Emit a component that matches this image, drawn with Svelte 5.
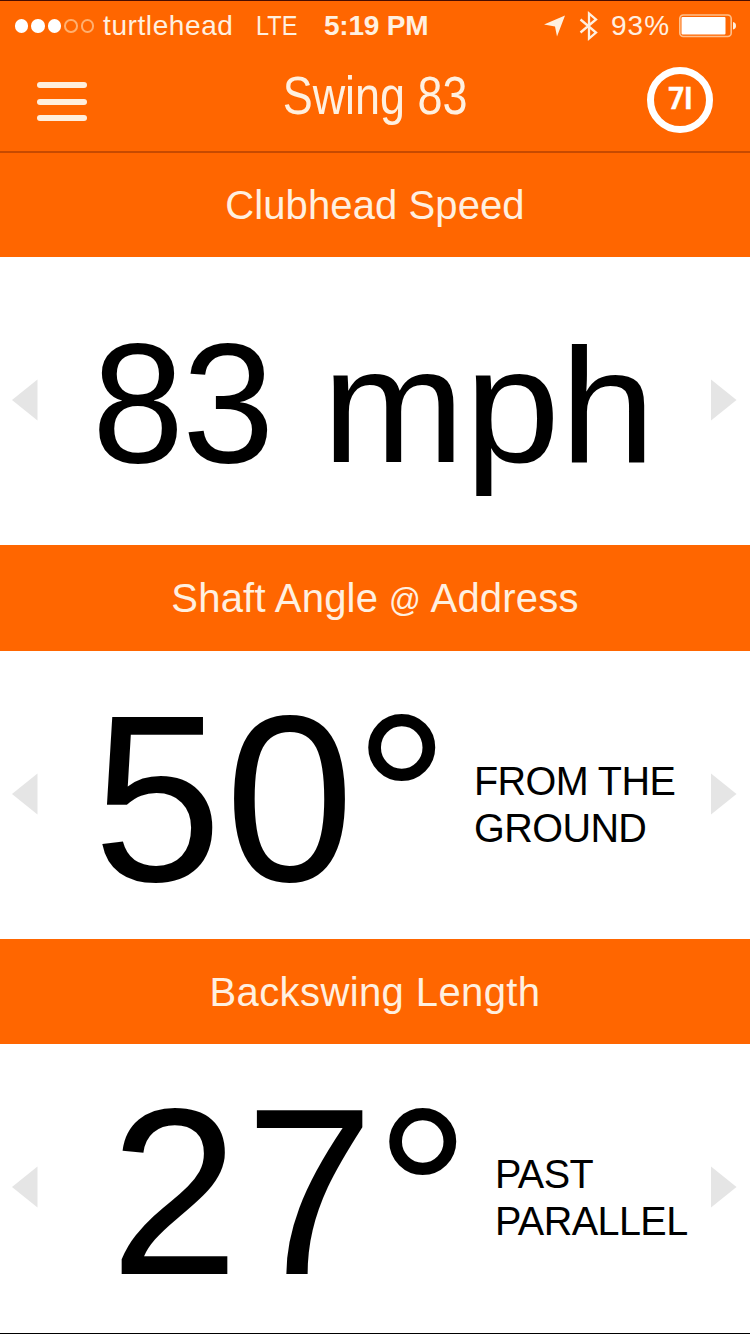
<script>
  const metrics = [
    { id: 'speed', title: ['Clubhead Speed'], value: '83', unit: 'mph' },
    { id: 'shaft', title: ['Shaft Angle ', '@', ' Address'], value: '50', note: ['FROM THE', 'GROUND'] },
    { id: 'back', title: ['Backswing Length'], value: '27', note: ['PAST', 'PARALLEL'] }
  ];
  const signal = [true, true, true, false, false];
</script>

<div class="screen">
  <header>
    <div class="status">
      <div class="dots">
        {#each signal as on}<i class:on></i>{/each}
      </div>
      <span class="carrier">turtlehead</span>
      <span class="network">LTE</span>
      <span class="time">5:19 PM</span>
      <svg class="location" width="22" height="22" viewBox="0 0 22 22"><path d="M21 0.500 L13 21.500 L11 11.500 L0 9.500 Z" fill="#fff0e0" /></svg>
      <svg class="bluetooth" width="20" height="32" viewBox="0 0 20 32"><path d="M1.500 9.500 L17 22.500 L10 28.500 V3.500 L17 9.500 L1.500 22.500" fill="none" stroke="#fff0e0" stroke-width="2.300" /></svg>
      <span class="percent">93%</span>
      <svg class="battery" width="58" height="24" viewBox="0 0 58 24">
        <rect x="0.800" y="1" width="51.400" height="21.500" rx="3.500" fill="none" stroke="#ffc08c" stroke-width="1.600" />
        <rect x="2.500" y="3" width="44" height="17.500" rx="1" fill="#fff" />
        <path d="M54 8 Q57 8.500 57 11.800 Q57 15 54 15.500 Z" fill="#fff0e0" />
      </svg>
    </div>
    <nav>
      <button class="menu" aria-label="Menu"><i></i><i></i><i></i></button>
      <h1><span>Swing 83</span></h1>
      <div class="club"><span>7I</span></div>
    </nav>
  </header>

  {#each metrics as m}
    <section class={m.id}>
      <h2><span>{#each m.title as part}<span class:at={part === '@'}>{part}</span>{/each}</span></h2>
      <div class="panel">
        <svg class="arrow" width="26" height="42" viewBox="0 0 26 42"><path d="M0 21 L25.500 0.500 V41.500 Z" fill="#e5e5e5" /></svg>
        <div class="reading">
          <span class="value">{m.value}</span>
          {#if m.unit}
            <span class="unit">{m.unit}</span>
          {:else}
            <span class="degree">°</span>
            <div class="note">
              {#each m.note as line}<span>{line}</span>{/each}
            </div>
          {/if}
        </div>
        <svg class="arrow" width="26" height="42" viewBox="0 0 26 42"><path d="M25.500 21 L0 0.500 V41.500 Z" fill="#e5e5e5" /></svg>
      </div>
    </section>
  {/each}
</div>

<style>
  :global(body) { overflow: hidden; }
  .screen {
    width: 750px;
    height: 1334px;
    box-sizing: border-box;
    display: flex;
    flex-direction: column;
    background: #fff;
    border-bottom: 1px solid #000;
    font-family: "Liberation Sans", Arial, sans-serif;
    color: #000;
  }
  header {
    height: 153px;
    box-sizing: border-box;
    background: #ff6600;
    border-top: 1px solid #4a0d00;
    border-bottom: 2px solid #c74a00;
    color: #fff0e0;
  }
  .status {
    display: flex;
    align-items: center;
    height: 50px;
    padding-left: 15px;
    font-size: 28px;
    line-height: 50px;
    white-space: pre;
  }
  .dots { display: flex; gap: 3px; width: 88px; }
  .dots i {
    width: 13.400px;
    height: 13.400px;
    box-sizing: border-box;
    border: 2px solid #ffb070;
    border-radius: 50%;
  }
  .dots i.on { background: #fff; border-color: #fff; }
  .carrier { width: 153px; letter-spacing: 0.600px; }
  .network { width: 68px; transform: scaleX(0.84); transform-origin: left; }
  .time { width: 220px; font-weight: bold; letter-spacing: -0.200px; }
  .location { margin-right: 13px; }
  .bluetooth { margin-right: 12px; }
  .percent { width: 68px; letter-spacing: 1px; }
  .status svg { flex: none; }

  nav { display: flex; height: 100px; padding: 0 37px; }
  .menu {
    display: flex;
    flex-direction: column;
    gap: 10.500px;
    width: 50px;
    margin: 31px 0 0;
    padding: 0;
    border: 0;
    background: none;
  }
  .menu i { height: 6px; border-radius: 3px; background: #ffeedd; }
  h1 {
    flex: 1;
    margin: 0 0 0 17px;
    text-align: center;
    font-weight: normal;
    font-size: 54px;
    line-height: 89px;
  }
  h1 span { display: inline-block; transform: scaleX(0.832); }
  .club {
    width: 66px;
    height: 66px;
    margin: 16px 0 0;
    box-sizing: border-box;
    border: 7px solid #fff;
    border-radius: 50%;
    text-align: center;
    color: #fff;
    font: bold 31px/50px Roboto, sans-serif;
  }
  .club span { display: inline-block; transform: scaleX(0.9); -webkit-text-stroke: 0.500px #fff; }

  section { display: flex; flex-direction: column; height: 394px; }
  .speed { height: 392px; }
  h2 {
    height: 106px;
    margin: 0;
    background: #ff6600;
    color: #fff0e0;
    text-align: center;
    font-weight: normal;
    font-size: 40px;
    line-height: 106px;
    letter-spacing: 0.200px;
    white-space: pre;
  }
  .speed h2 { height: 104px; line-height: 104px; letter-spacing: 0.100px; }
  .back h2 { height: 105px; letter-spacing: 0.400px; }
  .at {
    display: inline-block;
    width: 32px;
    font-size: 34px;
    line-height: 40px;
    vertical-align: 1px;
    transform: scaleX(0.920);
    transform-origin: left;
  }
  .panel {
    display: flex;
    align-items: center;
    flex: 1;
    padding: 0 13px 0 12px;
  }
  .arrow { flex: none; margin-bottom: 3px; }
  .reading { display: flex; flex: 1; align-items: center; height: 288px; }
  .value, .unit, .degree { padding-top: 7px; line-height: 281px; white-space: pre; transform-origin: left; }
  .value { font-size: 238px; width: 267px; letter-spacing: 3px; transform: scaleX(0.975); margin-left: 55px; }
  .degree { font-size: 239px; width: 120px; padding-top: 9px; line-height: 279px; margin-left: -6px; }
  .speed .value { font-size: 170px; width: 230px; letter-spacing: -2px; transform: scaleX(0.975); margin-left: 54px; padding-top: 5px; line-height: 283px; }
  .unit { font-size: 164px; width: 340px; padding-top: 9px; line-height: 279px; transform: scaleX(1.045); }
  .back .value { margin-left: 72px; width: 271px; letter-spacing: 6px; padding-top: 5px; line-height: 283px; }
  .note { display: flex; flex-direction: column; padding-top: 19px; font-size: 41px; line-height: 47px; white-space: nowrap; letter-spacing: -0.600px; }
  .note span { transform: scaleX(0.965); transform-origin: left; }
</style>
